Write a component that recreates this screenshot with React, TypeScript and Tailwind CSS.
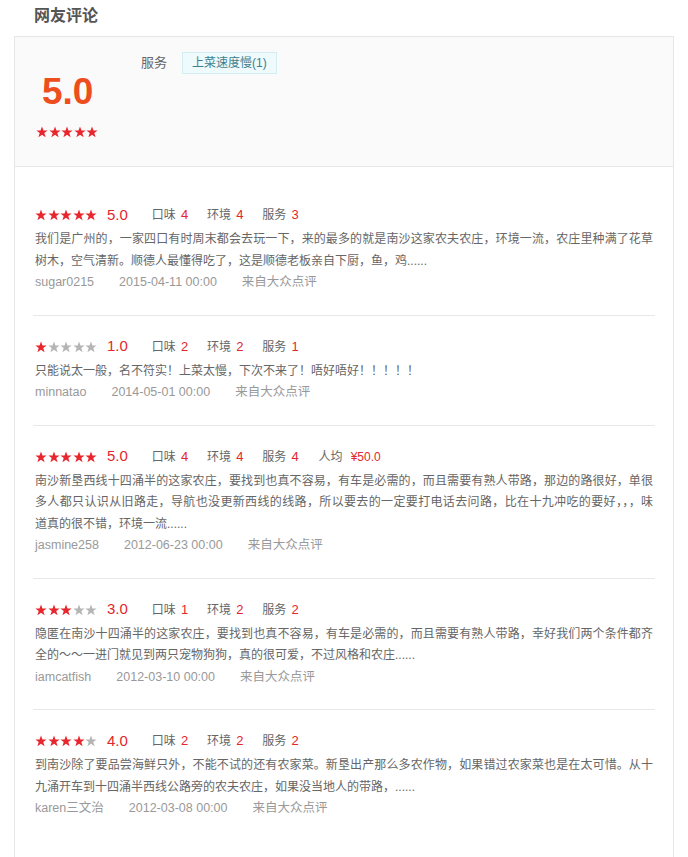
const reviews = [
  {
    stars: 5,
    score: "5.0",
    items: [
      { label: "口味", value: "4" },
      { label: "环境", value: "4" },
      { label: "服务", value: "3" },
    ],
    lines: [
      "我们是广州的，一家四口有时周末都会去玩一下，来的最多的就是南沙这家农夫农庄，环境一流，农庄里种满了花草",
      "树木，空气清新。顺德人最懂得吃了，这是顺德老板亲自下厨，鱼，鸡......",
    ],
    user: "sugar0215",
    date: "2015-04-11 00:00",
  },
  {
    stars: 1,
    score: "1.0",
    items: [
      { label: "口味", value: "2" },
      { label: "环境", value: "2" },
      { label: "服务", value: "1" },
    ],
    lines: ["只能说太一般，名不符实！上菜太慢，下次不来了！唔好唔好！！！！！"],
    user: "minnatao",
    date: "2014-05-01 00:00",
  },
  {
    stars: 5,
    score: "5.0",
    items: [
      { label: "口味", value: "4" },
      { label: "环境", value: "4" },
      { label: "服务", value: "4" },
    ],
    price: "¥50.0",
    lines: [
      "南沙新垦西线十四涌半的这家农庄，要找到也真不容易，有车是必需的，而且需要有熟人带路，那边的路很好，单很",
      "多人都只认识从旧路走，导航也没更新西线的线路，所以要去的一定要打电话去问路，比在十九冲吃的要好，，，味",
      "道真的很不错，环境一流......",
    ],
    user: "jasmine258",
    date: "2012-06-23 00:00",
  },
  {
    stars: 3,
    score: "3.0",
    items: [
      { label: "口味", value: "1" },
      { label: "环境", value: "2" },
      { label: "服务", value: "2" },
    ],
    lines: [
      "隐匿在南沙十四涌半的这家农庄，要找到也真不容易，有车是必需的，而且需要有熟人带路，幸好我们两个条件都齐",
      "全的～～一进门就见到两只宠物狗狗，真的很可爱，不过风格和农庄......",
    ],
    user: "iamcatfish",
    date: "2012-03-10 00:00",
  },
  {
    stars: 4,
    score: "4.0",
    items: [
      { label: "口味", value: "2" },
      { label: "环境", value: "2" },
      { label: "服务", value: "2" },
    ],
    lines: [
      "到南沙除了要品尝海鲜只外，不能不试的还有农家菜。新垦出产那么多农作物，如果错过农家菜也是在太可惜。从十",
      "九涌开车到十四涌半西线公路旁的农夫农庄，如果没当地人的带路，......",
    ],
    user: "karen三文治",
    date: "2012-03-08 00:00",
  },
];

function Star({ on, size }: { on: boolean; size: number }) {
  return (
    <svg width={size} height={size} viewBox="0 0 100 100" className="shrink-0">
      <polygon
        points="50,4 62,37 97,37 69,58 80,93 50,72 20,93 31,58 3,37 38,37"
        fill={on ? "#e8262d" : "#b5b5b5"}
      />
    </svg>
  );
}

function Stars({ count, size }: { count: number; size: number }) {
  return (
    <div className="flex gap-[0.5px]">
      {[0, 1, 2, 3, 4].map((i) => (
        <Star key={i} on={i < count} size={size} />
      ))}
    </div>
  );
}

export default function App() {
  return (
    <div className="min-h-screen bg-white px-[14px] pt-[4px] font-['Liberation_Sans','Noto_Sans_CJK_SC',sans-serif]">
      {/* Title */}
      <h2 className="ml-[20px] mb-[8px] text-[16px] leading-[24px] font-bold text-[#555]">
        网友评论
      </h2>

      <div className="border border-[#e6e6e6]">
        {/* Summary */}
        <div className="h-[130px] bg-[#fafafa] border-b border-[#e8e8e8] flex items-start pl-[21px] pt-[15px]">
          <div className="w-[105px] pt-[21px]">
            <div className="text-[37px] leading-[38px] font-bold text-[#ee4d1d] pl-[6px]">
              5.0
            </div>
            <div className="mt-[15px]">
              <Stars count={5} size={12} />
            </div>
          </div>
          <div className="flex items-center">
            <span className="text-[13px] text-[#666]">服务</span>
            <span className="ml-[15px] h-[22px] px-[9px] flex items-center bg-[#eefafb] border border-[#d3eef2] text-[12px] text-[#3f7f8f]">
              上菜速度慢(1)
            </span>
          </div>
        </div>

        {/* Reviews */}
        <div className="px-[18px] pt-[17px] pb-[40px]">
          {reviews.map((r, idx) => (
            <div
              key={idx}
              className={
                idx < reviews.length - 1
                  ? "px-[2px] pt-[17px] pb-[21px] border-b border-[#e8e8e8]"
                  : "px-[2px] pt-[17px] pb-[21px]"
              }
            >
              <div className="h-[28px] flex items-center">
                <Stars count={r.stars} size={12} />
                <span className="ml-[10px] text-[15px] text-[#e4262c]">{r.score}</span>
                {r.items.map((it, i) => (
                  <span
                    key={i}
                    className={
                      i === 0
                        ? "ml-[24px] text-[12px] text-[#666]"
                        : "ml-[19px] text-[12px] text-[#666]"
                    }
                  >
                    {it.label}
                    <span className="ml-[5px] text-[13px] text-[#e4262c]">{it.value}</span>
                  </span>
                ))}
                {r.price && (
                  <span className="ml-[20px] text-[12px] text-[#666]">
                    人均
                    <span className="ml-[8px] text-[12px] text-[#e4262c]">{r.price}</span>
                  </span>
                )}
              </div>
              <div className="text-[12px] leading-[21.5px] text-[#666]">
                {r.lines.map((line, i) => (
                  <div
                    key={i}
                    className={
                      i < r.lines.length - 1
                        ? "text-justify [text-align-last:justify] whitespace-nowrap"
                        : "whitespace-nowrap"
                    }
                  >
                    {line}
                  </div>
                ))}
              </div>
              <div className="flex gap-[25px] text-[12.5px] leading-[21.5px] text-[#999]">
                <span>{r.user}</span>
                <span>{r.date}</span>
                <span>来自大众点评</span>
              </div>
            </div>
          ))}
        </div>
      </div>
    </div>
  );
}
